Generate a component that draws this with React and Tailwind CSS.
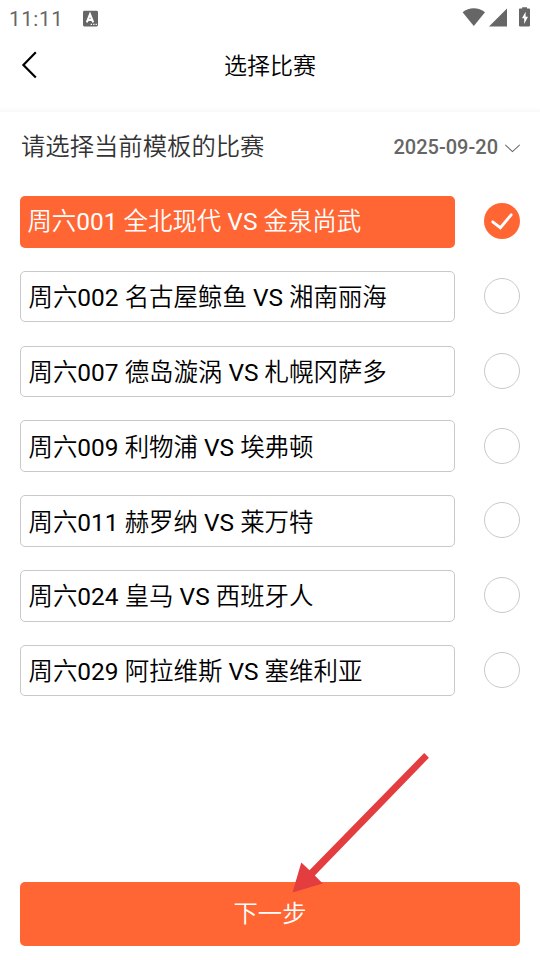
const matches = [
  '周六001 全北现代 VS 金泉尚武',
  '周六002 名古屋鲸鱼 VS 湘南丽海',
  '周六007 德岛漩涡 VS 札幌冈萨多',
  '周六009 利物浦 VS 埃弗顿',
  '周六011 赫罗纳 VS 莱万特',
  '周六024 皇马 VS 西班牙人',
  '周六029 阿拉维斯 VS 塞维利亚',
];

function StatusBar() {
  return (
    <div className="flex h-9 items-center pl-[9px] pr-[10px] text-[#666]">
      <span className="w-[53px] pt-px text-[20.5px] leading-6 tracking-[0.65px]">11:11</span>
      <svg className="ml-5 shrink-0" width="18" height="17" viewBox="-0.5 0 18 17">
        <rect x="0.5" y="0.8" width="15" height="15.6" rx="1.4" fill="#666" />
        <path d="M4.3 12.3 7.5 4.4 10.7 12.3M5.6 10h3.8" fill="none" stroke="#fff" strokeWidth="2.1" />
        <path d="M8.2 14.4h1.3M10.7 14.4H12M13.1 14.4h1.3" stroke="#fff" strokeWidth="1.2" />
      </svg>
      <svg className="ml-auto" width="68" height="22" viewBox="0 -1 68 22" fill="#666">
        <path d="M0.6 4.2C7-1 16.5-1 23 4.2L11.8 18Z" />
        <path d="M45 0.4V18.4H27Z" />
        <path d="M60.2 -0.8h4.8v1.4h2.2q0.8 0 0.8 0.8v16.2q0 0.8-0.8 0.8h-9.4q-0.8 0-0.8-0.8V1.4q0-0.8 0.8-0.8h2.4Z" />
        <path d="M63.6 3.8 60 10.3h2.2v5.6l3.8-7.2h-2.4Z" fill="#fff" />
      </svg>
    </div>
  );
}

function Radio({ checked }) {
  if (!checked) return <span className="mb-[1.2px] h-9 w-9 shrink-0 rounded-full border border-[#c8c9cc]" />;
  return (
    <span className="mb-px h-9 w-9 shrink-0 rounded-full bg-[#ff6634]">
      <svg width="36" height="36" viewBox="0 0 36 36" fill="none" stroke="#fff" strokeWidth="2.8" strokeLinecap="round">
        <path d="M8.7 18.8 16.4 24.7 27.2 11.8" />
      </svg>
    </span>
  );
}

export default function App() {
  return (
    <div className="relative flex h-[960px] w-[540px] flex-col overflow-hidden bg-white font-[Roboto,'Noto_Sans_CJK_SC_DemiLight','Noto_Sans_CJK_SC_Light','Noto_Sans_CJK_SC',sans-serif]">
      <StatusBar />
      <header className="grid h-[72px] grid-cols-[1fr_auto_1fr] items-start">
        <svg className="ml-5 mt-[14px]" width="20" height="30" viewBox="0 0 20 30" fill="none" stroke="#000" strokeWidth="2.2">
          <path d="M15.8 2.2 3.4 14.9 15.8 27.6" />
        </svg>
        <h1 className="mt-4 text-[23px] leading-[30px] text-black">选择比赛</h1>
      </header>
      <div className="h-1 shrink-0 bg-linear-to-b from-[#fdfdfd] to-[#f8f8f8]" />
      <main className="flex flex-1 flex-col px-5">
        <div className="flex h-[84px] items-start justify-between">
          <h2 className="mt-[17px] pl-px text-[24.35px] leading-9 text-[#333]">请选择当前模板的比赛</h2>
          <div className="mt-[22px] flex items-center">
            <span className="text-[20px] font-medium leading-[26px] text-[#666]">2025-09-20</span>
            <svg className="ml-[7px] mt-[2px]" width="15" height="9" viewBox="0 0 15 9" fill="none" stroke="#666" strokeWidth="1.1">
              <path d="M0.2 0.8 7.5 7.6 14.8 0.8" />
            </svg>
          </div>
        </div>
        <ul className="flex flex-col gap-[23.13px]">
          {matches.map((name, i) => (
            <li key={name} className="flex h-[51.67px] items-center justify-between">
              <div
                className={
                  i === 0
                    ? 'flex h-full w-[435px] items-center rounded-[5px] bg-[#ff6634] pt-px pl-[7.4px] text-[24.45px] text-white'
                    : 'flex h-full w-[435px] items-center rounded-[5px] border border-[#c8c9cc] pl-[7.5px] pt-[3.9px] text-[24.45px] text-black'
                }
              >
                {name}
              </div>
              <Radio checked={i === 0} />
            </li>
          ))}
        </ul>
        <button className="mb-[14px] mt-auto h-16 shrink-0 rounded-[5px] bg-[#ff6634] pt-px text-[24.3px] text-white">下一步</button>
      </main>
      <svg className="pointer-events-none absolute left-[290px] top-[750px]" width="142" height="144" viewBox="290 750 142 144" fill="#e43d3f">
        <path d="M424.2 753 428.9 757.8 314.8 875.4 322.7 883.5 292.5 892.4 301.3 862.5 309.5 870.3Z" />
      </svg>
    </div>
  );
}
